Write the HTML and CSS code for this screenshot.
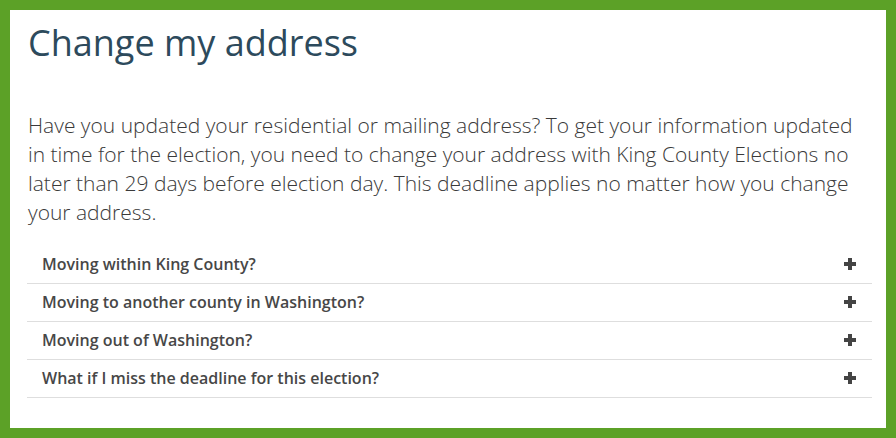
FILE: index.html
```html
<!DOCTYPE html>
<html lang="en">
<head>
  <meta charset="UTF-8">
  <title>Change my address</title>
  <meta name="viewport" content="width=device-width, initial-scale=1">
  <link rel="stylesheet" href="styles.css">
</head>
<body>
  <div class="frame">
    <h1 class="title">Change my address</h1>
    <p class="intro">Have you updated your residential or mailing address? To get your information updated in time for the election, you need to change your address with King County Elections no later than 29 days before election day. This deadline applies no matter how you change your address.</p>

    <div class="accordion">
      <div class="item"><span>Moving within King County?</span><span class="plus"></span></div>
      <div class="item"><span>Moving to another county in Washington?</span><span class="plus"></span></div>
      <div class="item"><span>Moving out of Washington?</span><span class="plus"></span></div>
      <div class="item"><span>What if I miss the deadline for this election?</span><span class="plus"></span></div>
    </div>
  </div>
</body>
</html>
```

FILE: styles.css
```css
body { margin: 0; padding: 0; font-family: "Open Sans", sans-serif; background: #5ca127; }
.frame { margin: 10px; height: 418px; box-sizing: border-box; background: white; padding: 11px 14px 0 18px; }
.title { margin: 0; font-size: 36px; font-weight: 400; line-height: 44px; color: #2d4a5c; }
.intro { margin: 46px 0 19px; font-size: 21px; font-weight: 300; line-height: 29px; color: #3a3a3a; }
.accordion { margin-left: -1px; }
.item { display: flex; justify-content: space-between; align-items: center; height: 35px; padding: 0 16px 2px 15px; border-bottom: 1px solid #dedede; font-size: 16px; font-weight: 600; color: #474747; }
.plus { position: relative; width: 12px; height: 12px; }
.plus::before, .plus::after { content: ""; position: absolute; background: #444; }
.plus::before { left: 0; top: 4px; width: 12px; height: 4px; }
.plus::after { left: 4px; top: 0; width: 4px; height: 12px; }
```
